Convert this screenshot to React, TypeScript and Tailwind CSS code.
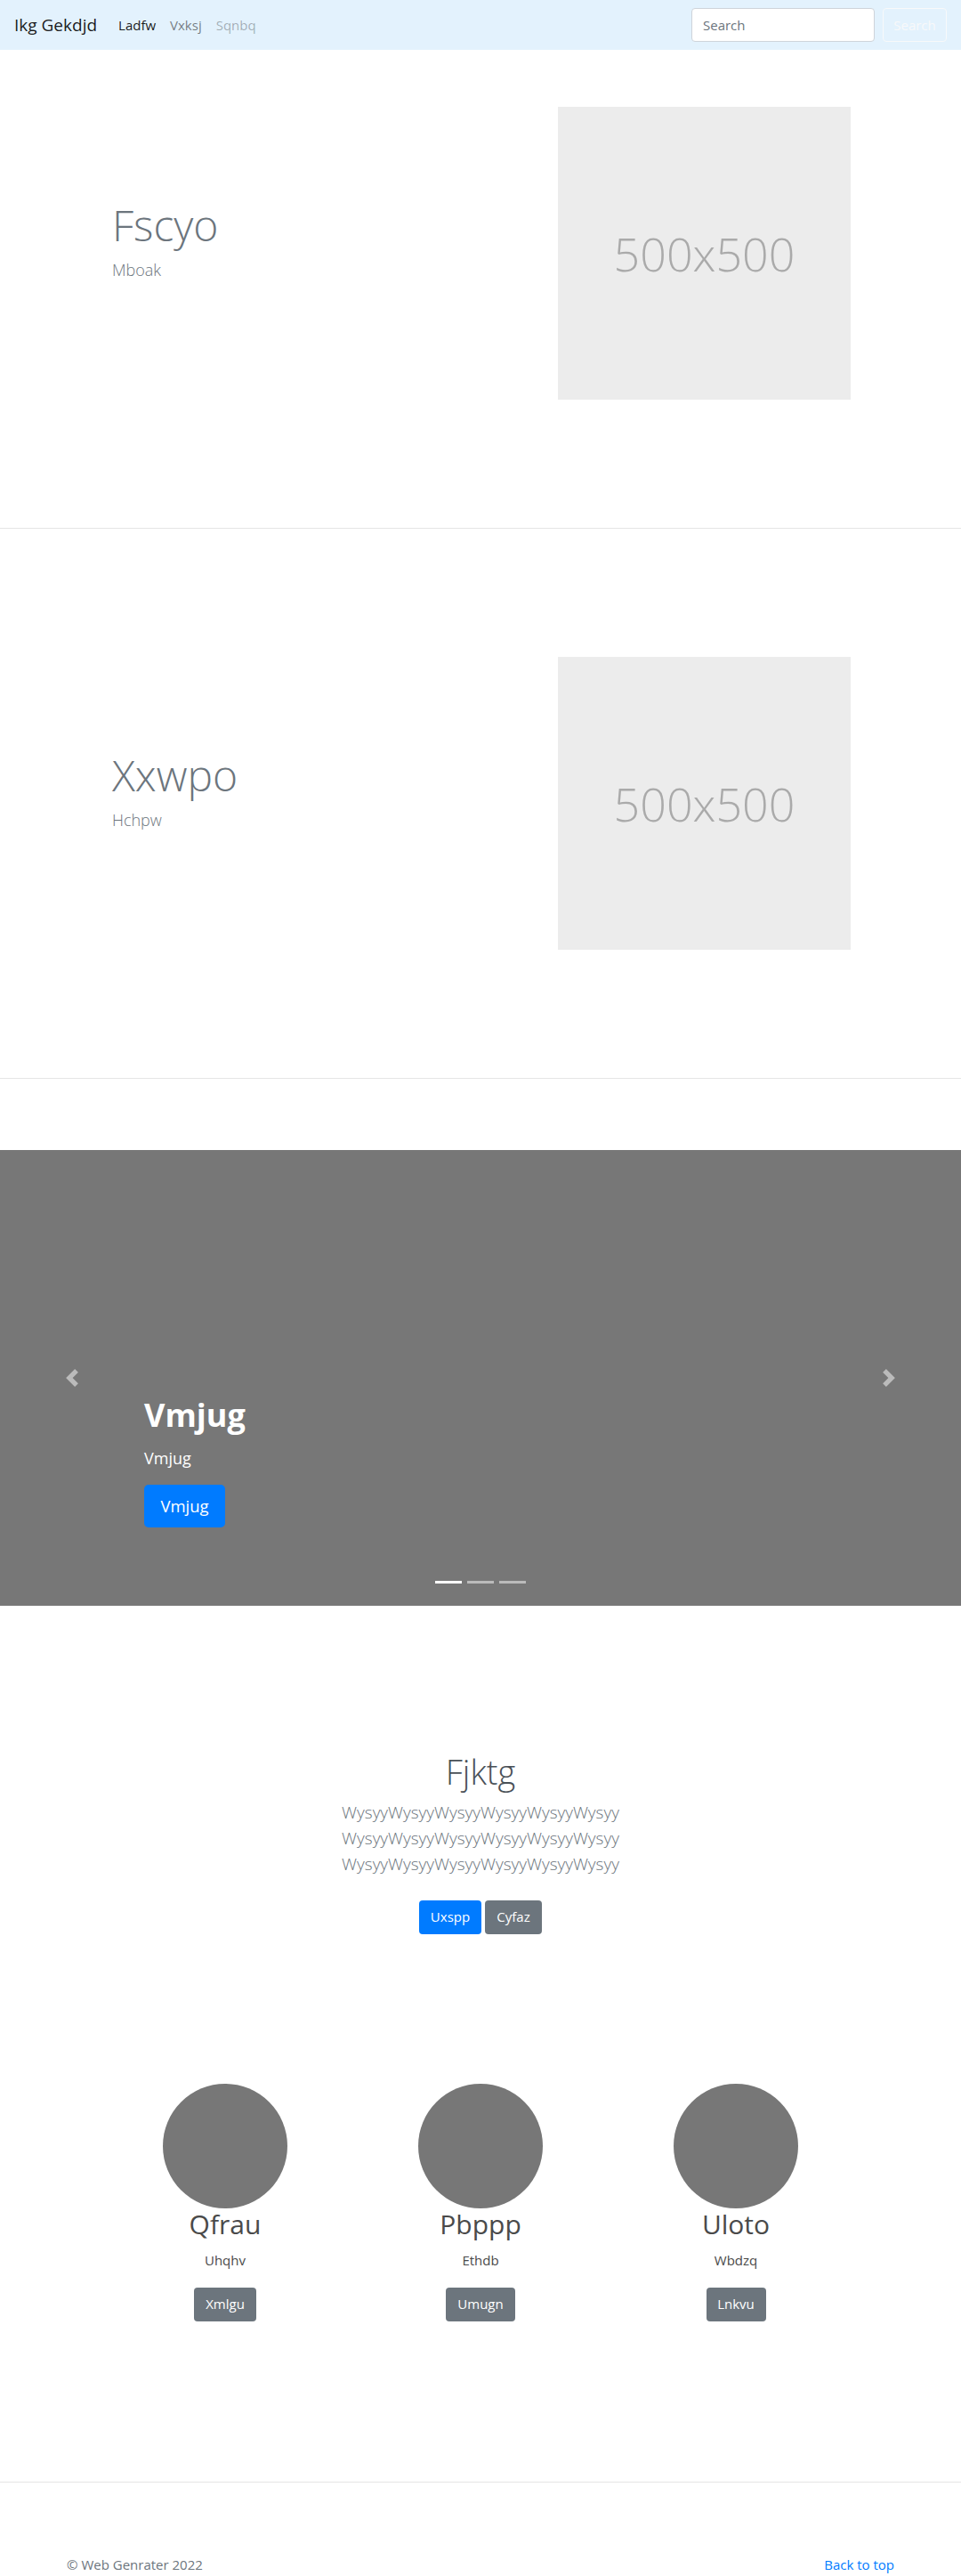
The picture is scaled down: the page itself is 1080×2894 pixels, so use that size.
import React from 'react';

const font = "font-['Open_Sans','Noto_Sans',sans-serif]";

function Placeholder() {
  return (
    <div className="w-[329px] h-[329px] bg-[#ececec] flex items-center justify-center">
      <span className="text-[52px] font-light text-[#aaaaaa] leading-none">500x500</span>
    </div>
  );
}

function Navbar() {
  return (
    <nav className="h-[56px] bg-[#e3f2fd] flex items-center px-4">
      <a className="text-[19px] text-black/90 mr-4">Ikg Gekdjd</a>
      <ul className="flex items-center text-[15px]">
        <li className="px-2 text-black/90">Ladfw</li>
        <li className="px-2 text-black/50">Vxksj</li>
        <li className="px-2 text-black/30">Sqnbq</li>
      </ul>
      <form className="ml-auto flex items-center">
        <input
          className="w-[206px] h-[38px] bg-white border border-[#ced4da] rounded-[4px] px-3 text-[15px] text-[#495057] placeholder:text-[#6c757d] outline-none"
          placeholder="Search"
        />
        <button className="ml-[9px] w-[72px] h-[38px] border border-[#f8f9fa] rounded-[4px] text-[15px] text-[#f8f9fa]">
          Search
        </button>
      </form>
    </nav>
  );
}

function Feature({ title, sub, top }: { title: string; sub: string; top: string }) {
  return (
    <section className={`${top} pb-[144px] border-b border-[#e5e5e5]`}>
      <div className="flex items-center">
        <div className="w-[540px] pl-[126px]">
          <h1 className="text-[48px] font-light leading-[1.2] text-[#6c757d] mb-2">{title}</h1>
          <p className="text-[18px] font-light leading-[27px] text-[#6c757d] mb-7">{sub}</p>
        </div>
        <div className="pl-[87px]">
          <Placeholder />
        </div>
      </div>
    </section>
  );
}

function Chevron({ dir }: { dir: 'prev' | 'next' }) {
  return (
    <svg width="20" height="20" viewBox="0 0 8 8" fill="#fff" className="opacity-50">
      {dir === 'prev' ? (
        <path d="M5.25 0l-4 4 4 4 1.5-1.5L4.25 4l2.5-2.5L5.25 0z" />
      ) : (
        <path d="M2.75 0l-1.5 1.5L3.75 4l-2.5 2.5L2.75 8l4-4-4-4z" />
      )}
    </svg>
  );
}

function Carousel() {
  return (
    <div className="relative mt-[80px] h-[512px] bg-[#777777] flex items-end pl-[162px] pb-[88px]">
      <div className="absolute left-[71px] top-[246px]">
        <Chevron dir="prev" />
      </div>
      <div className="absolute right-[71px] top-[246px]">
        <Chevron dir="next" />
      </div>
      <div className="text-white">
        <h1 className="text-[36px] font-bold leading-[43px] mb-[14px]">Vmjug</h1>
        <p className="text-[18px] leading-[27px] mb-4">Vmjug</p>
        <a className="w-[91px] h-[48px] rounded-[5px] bg-[#007bff] flex items-center justify-center text-[18.5px]">
          Vmjug
        </a>
      </div>
      <ol className="absolute bottom-[25px] left-0 right-0 flex justify-center gap-[6px]">
        <li className="w-[30px] h-[3px] bg-white" />
        <li className="w-[30px] h-[3px] bg-white/50" />
        <li className="w-[30px] h-[3px] bg-white/50" />
      </ol>
    </div>
  );
}

function Jumbotron() {
  return (
    <section className="pt-[164px] text-center">
      <h1 className="text-[38px] font-light leading-[1.2] text-[#495057] mb-2">Fjktg</h1>
      <p className="text-[19px] font-light leading-[29px] text-[#6c757d]">
        <span className="block">WysyyWysyyWysyyWysyyWysyyWysyy</span>
        <span className="block">WysyyWysyyWysyyWysyyWysyyWysyy</span>
        <span className="block">WysyyWysyyWysyyWysyyWysyyWysyy</span>
      </p>
      <div className="mt-[26px] flex justify-center gap-1 text-[15px] text-white">
        <a className="w-[70px] h-[38px] rounded-[4px] bg-[#007bff] flex items-center justify-center">Uxspp</a>
        <a className="w-[64px] h-[38px] rounded-[4px] bg-[#6c757d] flex items-center justify-center">Cyfaz</a>
      </div>
    </section>
  );
}

const team = [
  { name: 'Qfrau', sub: 'Uhqhv', btn: 'Xmlgu', w: 'w-[70px]' },
  { name: 'Pbppp', sub: 'Ethdb', btn: 'Umugn', w: 'w-[78px]' },
  { name: 'Uloto', sub: 'Wbdzq', btn: 'Lnkvu', w: 'w-[67px]' },
];

function Team() {
  return (
    <section className="pt-[168px] pb-[180px] border-b border-[#e5e5e5]">
      <div className="w-[861px] mx-auto grid grid-cols-3">
        {team.map((m) => (
          <div key={m.name} className="flex flex-col items-center">
            <div className="w-[140px] h-[140px] rounded-full bg-[#777777]" />
            <h2 className="text-[30px] leading-[36px] text-[#4a4a4a] mb-3">{m.name}</h2>
            <p className="text-[15px] leading-[21px] text-[#4a4a4a] mb-5">{m.sub}</p>
            <a className={`${m.w} h-[38px] rounded-[4px] bg-[#6c757d] text-white text-[15px] flex items-center justify-center`}>
              {m.btn}
            </a>
          </div>
        ))}
      </div>
    </section>
  );
}

function Footer() {
  return (
    <footer className="pt-[80px] text-[15px] leading-6">
      <div className="w-[960px] mx-auto px-[15px] flex justify-between">
        <p className="text-[#6c757d]">© Web Genrater 2022</p>
        <a className="text-[#007bff]">Back to top</a>
      </div>
    </footer>
  );
}

export default function App() {
  return (
    <div className={`${font} bg-white`}>
      <Navbar />
      <Feature title="Fscyo" sub="Mboak" top="pt-[64px]" />
      <Feature title="Xxwpo" sub="Hchpw" top="pt-[144px]" />
      <Carousel />
      <Jumbotron />
      <Team />
      <Footer />
    </div>
  );
}
